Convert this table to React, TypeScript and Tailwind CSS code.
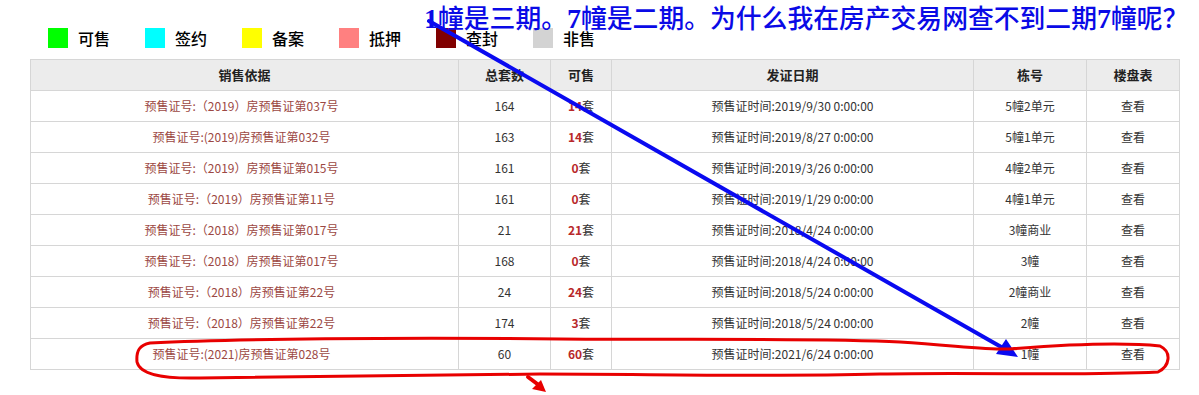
import React from 'react';

type Row = {
  basis: string;
  total: number;
  avail: number;
  date: string;
  building: string;
};

const legend = [
  { label: '可售', color: 'bg-[#00ff00]' },
  { label: '签约', color: 'bg-[#00ffff]' },
  { label: '备案', color: 'bg-[#ffff00]' },
  { label: '抵押', color: 'bg-[#ff8080]' },
  { label: '查封', color: 'bg-[#800000]' },
  { label: '非售', color: 'bg-[#d3d3d3]' },
];

const rows: Row[] = [
  { basis: '预售证号:（2019）房预售证第037号', total: 164, avail: 14, date: '2019/9/30 0:00:00', building: '5幢2单元' },
  { basis: '预售证号:(2019)房预售证第032号', total: 163, avail: 14, date: '2019/8/27 0:00:00', building: '5幢1单元' },
  { basis: '预售证号:（2019）房预售证第015号', total: 161, avail: 0, date: '2019/3/26 0:00:00', building: '4幢2单元' },
  { basis: '预售证号:（2019）房预售证第11号', total: 161, avail: 0, date: '2019/1/29 0:00:00', building: '4幢1单元' },
  { basis: '预售证号:（2018）房预售证第017号', total: 21, avail: 21, date: '2018/4/24 0:00:00', building: '3幢商业' },
  { basis: '预售证号:（2018）房预售证第017号', total: 168, avail: 0, date: '2018/4/24 0:00:00', building: '3幢' },
  { basis: '预售证号:（2018）房预售证第22号', total: 24, avail: 24, date: '2018/5/24 0:00:00', building: '2幢商业' },
  { basis: '预售证号:（2018）房预售证第22号', total: 174, avail: 3, date: '2018/5/24 0:00:00', building: '2幢' },
  { basis: '预售证号:(2021)房预售证第028号', total: 60, avail: 60, date: '2021/6/24 0:00:00', building: '1幢' },
];

const cell = 'border border-[#d6d6d6] text-center align-middle';

const App: React.FC = () => {
  return (
    <div className="relative w-[1199px] h-[395px] bg-white overflow-hidden font-['Microsoft_YaHei','Noto_Sans_CJK_SC',sans-serif]">
      {/* legend */}
      <div className="flex pl-[48px] pt-[28px]">
        {legend.map(item => (
          <div key={item.label} className="flex items-center w-[97px] gap-[10px]">
            <span className={`w-[20px] h-[20px] ${item.color}`} />
            <span className="text-[16px] leading-[20px] text-black font-medium">{item.label}</span>
          </div>
        ))}
      </div>

      <table className="mt-[11px] ml-[30px] w-[1149px] table-fixed border-collapse text-[12px] text-[#333]">
        <colgroup>
          <col className="w-[428px]" />
          <col className="w-[92px]" />
          <col className="w-[61px]" />
          <col className="w-[362px]" />
          <col className="w-[113px]" />
          <col className="w-[93px]" />
        </colgroup>
        <thead>
          <tr className="h-[31px] bg-[#ececec] text-[13px] font-bold text-[#222]">
            <th className={cell}>销售依据</th>
            <th className={cell}>总套数</th>
            <th className={cell}>可售</th>
            <th className={cell}>发证日期</th>
            <th className={cell}>栋号</th>
            <th className={cell}>楼盘表</th>
          </tr>
        </thead>
        <tbody>
          {rows.map((r, i) => (
            <tr key={i} className="h-[31px]">
              <td className={`${cell} pr-[6px] text-[#9c4843]`}>{r.basis}</td>
              <td className={cell}>{r.total}</td>
              <td className={cell}>
                <span className="font-bold text-[#b8282a]">{r.avail}</span>套
              </td>
              <td className={cell}>预售证时间:{r.date}</td>
              <td className={cell}>{r.building}</td>
              <td className={cell}>查看</td>
            </tr>
          ))}
        </tbody>
      </table>

      {/* annotation text */}
      <div className="absolute left-[424px] top-[4px] text-[25.8px] leading-[30px] font-medium text-[#0a0ae6] font-['Liberation_Serif','Noto_Sans_CJK_SC',serif] whitespace-nowrap">
        <b className="text-[28px]">1</b>幢是三期。<b className="text-[28px]">7</b>幢是二期。为什么我在房产交易网查不到二期<b className="text-[28px]">7</b>幢呢？
      </div>

      {/* annotation drawings */}
      <svg className="absolute inset-0 pointer-events-none" width="1199" height="395" viewBox="0 0 1199 395">
        <line x1="429" y1="21" x2="1003" y2="348" stroke="#0a0af0" strokeWidth="4" strokeLinecap="round" />
        <polygon points="1018,357 996,354 1006,339" fill="#0a0af0" />
        <path
          d="M150,343 C230,339 400,337 560,339 C700,340 820,338 900,342 C960,346 990,350 1010,349 C1060,345 1120,342 1160,346 C1172,352 1170,366 1158,372 C1080,376 980,372 880,374 C760,377 650,374 540,374 C420,376 300,376 200,378 C160,379 140,374 137,362 C136,350 140,345 150,343 Z"
          fill="none"
          stroke="#e80000"
          strokeWidth="3"
          strokeLinejoin="round"
        />
        <line x1="528" y1="377" x2="540" y2="386" stroke="#e80000" strokeWidth="4" strokeLinecap="round" />
        <polygon points="546,392 532,389 541,380" fill="#e80000" />
      </svg>
    </div>
  );
};

export default App;
